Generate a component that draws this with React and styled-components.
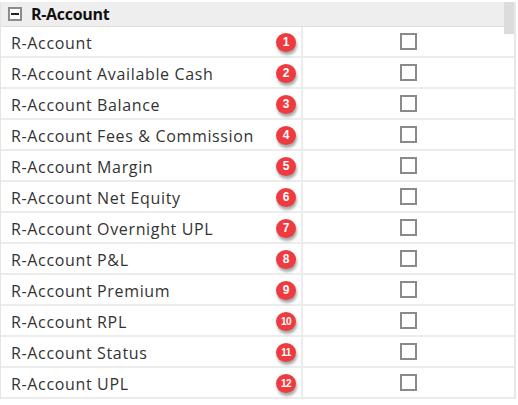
import React from 'react';
import { styled, createGlobalStyle } from 'styled-components';

const GlobalStyle = createGlobalStyle`
  html, body {
    margin: 0;
    padding: 0;
    background: #ffffff;
  }
  body {
    font-family: "Open Sans", "Noto Sans", sans-serif;
  }
  *, *::before, *::after {
    box-sizing: border-box;
  }
`;

const Grid = styled.div`
  position: relative;
  width: 516px;
  border-left: 1px solid #e4e4e4;
  border-right: 2px solid #e8e8e8;
`;

const GroupHeader = styled.div`
  height: 25px;
  margin-top: 2px;
  display: grid;
  grid-template-columns: 14px auto;
  column-gap: 9px;
  justify-content: start;
  align-items: center;
  background: #eeeeee;
  border-bottom: 1px solid #dedede;
  padding-left: 7px;
`;

const Toggle = styled.span`
  width: 14px;
  height: 14px;
  border: 2px solid #8c8c8c;
  display: flex;
  align-items: center;
  justify-content: center;
  background: #fff;
  &::after {
    content: '';
    width: 8px;
    height: 2px;
    background: #222;
  }
`;

const GroupTitle = styled.span`
  font-weight: bold;
  font-size: 16px;
  letter-spacing: -0.3px;
  color: #111111;
`;

const ScrollThumb = styled.div`
  position: absolute;
  top: 0;
  right: 0;
  width: 10px;
  height: 32px;
  background: #dcdcdc;
`;

const Row = styled.div`
  display: grid;
  grid-template-columns: 302px 1fr;
  height: 31px;
  border-bottom: 2px solid #ececec;
`;

const FieldName = styled.div`
  display: flex;
  align-items: center;
  justify-content: space-between;
  padding: 3px 5px 0 10px;
  border-right: 2px solid #ececec;
  font-size: 16px;
  letter-spacing: 0.65px;
  color: #333333;
`;

const CheckCell = styled.div`
  display: flex;
  align-items: center;
  justify-content: center;
`;

const Badge = styled.span`
  flex-shrink: 0;
  width: 20px;
  height: 19px;
  margin-top: -2px;
  border-radius: 50%;
  background: #ef3a3f;
  color: #fff;
  font-family: "Liberation Sans", Arial, sans-serif;
  font-weight: bold;
  font-size: ${(p) => (p.$small ? '10px' : '12px')};
  letter-spacing: ${(p) => (p.$small ? '-0.5px' : '0')};
  display: flex;
  align-items: center;
  justify-content: center;
  box-shadow: 1px 3px 3px rgba(0, 0, 0, 0.35);
`;

const CheckBox = styled.span`
  width: 17px;
  height: 17px;
  border: 2px solid #8a8a8a;
  background: #fff;
`;

const fields = [
  'R-Account',
  'R-Account Available Cash',
  'R-Account Balance',
  'R-Account Fees & Commission',
  'R-Account Margin',
  'R-Account Net Equity',
  'R-Account Overnight UPL',
  'R-Account P&L',
  'R-Account Premium',
  'R-Account RPL',
  'R-Account Status',
  'R-Account UPL',
];

const App = () => {
  return (
    <Grid>
      <GlobalStyle />
      <ScrollThumb />
      <GroupHeader>
        <Toggle />
        <GroupTitle>R-Account</GroupTitle>
      </GroupHeader>
      {fields.map((name, i) => (
        <Row key={name}>
          <FieldName>
            <span>{name}</span>
            <Badge $small={i >= 9}>{i + 1}</Badge>
          </FieldName>
          <CheckCell>
            <CheckBox />
          </CheckCell>
        </Row>
      ))}
    </Grid>
  );
};

export default App;
